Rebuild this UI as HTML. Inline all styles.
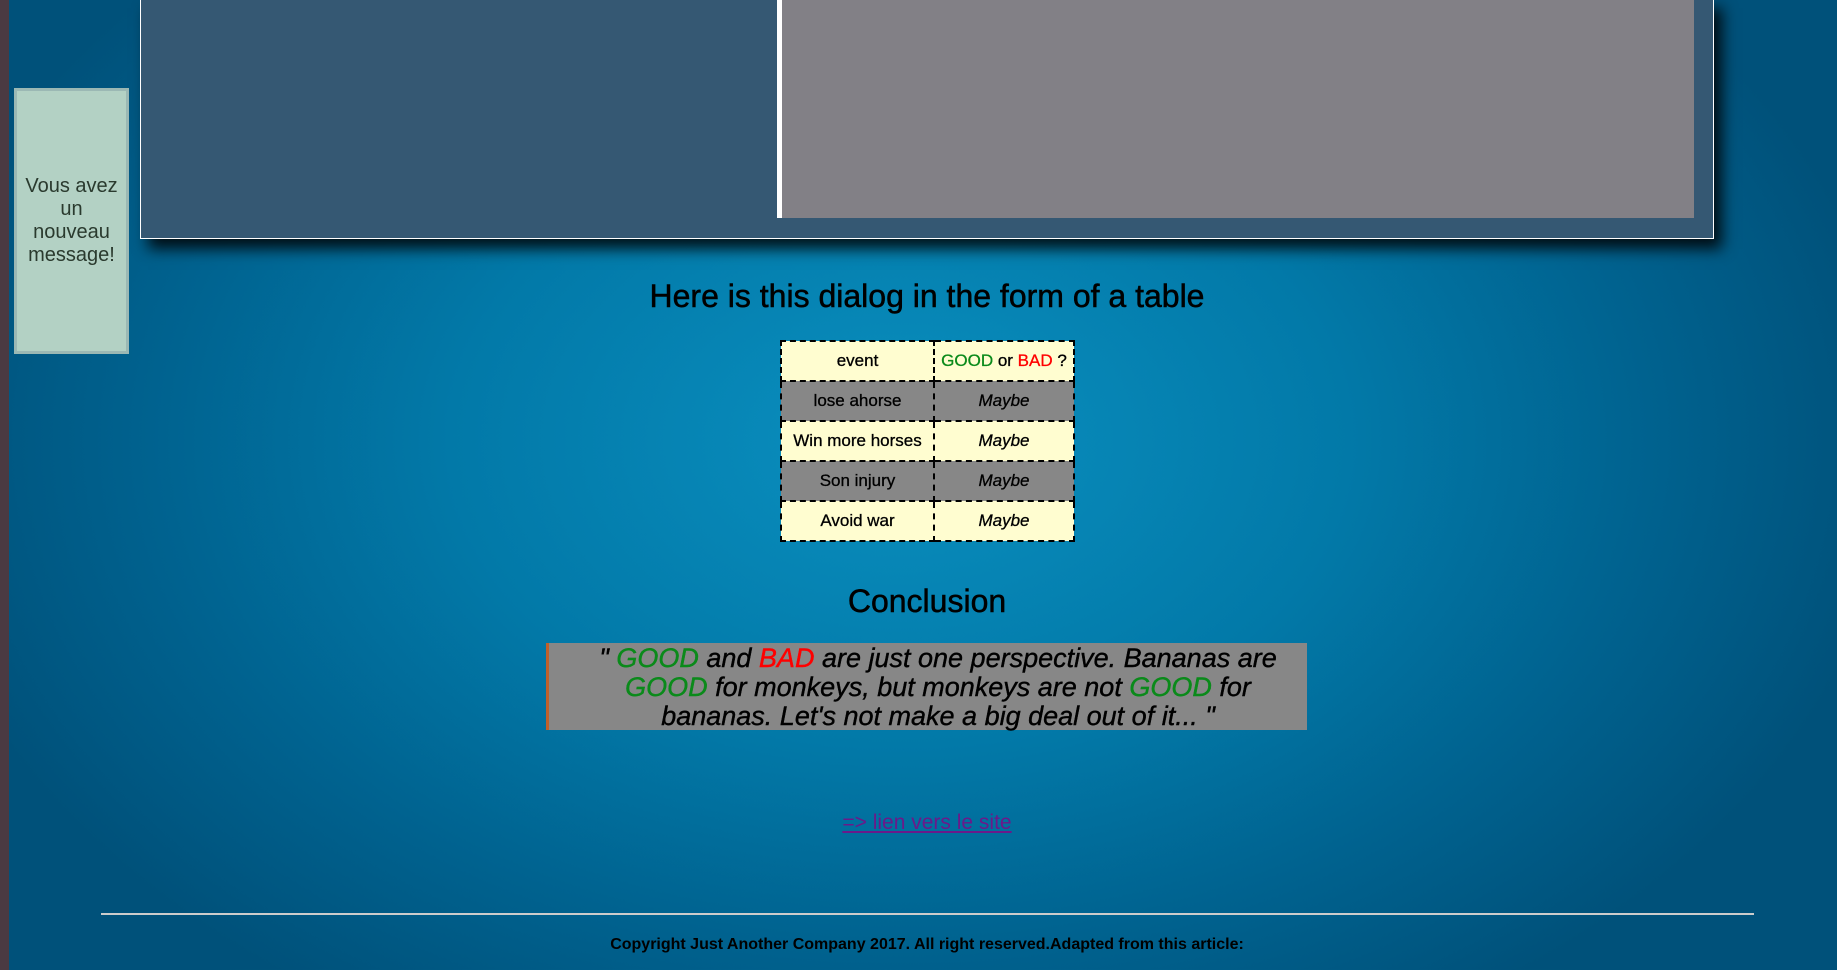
<!DOCTYPE html>
<html><head><meta charset="utf-8"><style>
*{margin:0;padding:0;box-sizing:border-box}
html,body{width:1837px;height:970px;overflow:hidden}
body{position:relative;font-family:"Liberation Sans","DejaVu Sans",sans-serif;
background:radial-gradient(ellipse 1000px 680px at 900px 440px,#0a8fbf 0%,#0279a8 45%,#00628f 75%,#00517a 100%);}
.strip{position:absolute;left:0;top:0;width:9px;height:970px;background:#4a3a42}
.msg{position:absolute;left:14px;top:88px;width:115px;height:266px;background:#b3d1c4;border:3px solid #9bb8b4;
display:flex;align-items:center;justify-content:center;text-align:center;color:#2a3a2e;font-size:20px;line-height:23px}
.panel{position:absolute;left:140px;top:-2px;width:1574px;height:241px;background:#355873;border:1px solid #fff;border-top:none;box-shadow:8px 10px 14px rgba(0,0,0,.85)}
.gray{position:absolute;left:636px;top:0;width:917px;height:220px;background:#828086;border-left:5px solid #fff}
h2{position:absolute;left:0;width:1854px;text-align:center;font-weight:normal;color:#000;font-size:32px;-webkit-text-stroke:0.5px #000}
table{position:absolute;left:780px;top:340px;width:295px;border-collapse:collapse;font-size:17px}
td{border:2px dashed #000;height:40px;text-align:center;padding:0 3px;white-space:nowrap;-webkit-text-stroke:0.3px #000}
.y td{background:#fffdd0}.g td{background:#878787}
td.i{font-style:italic}
.quote{position:absolute;left:546px;top:643px;width:761px;height:87px;background:#878787;border-left:3px solid #c0602a;
font-style:italic;font-size:27px;line-height:29px;text-align:center;padding:1px 20px 0 40px;color:#000;-webkit-text-stroke:0.4px}
.gr{color:#0a8a1a;-webkit-text-stroke-color:#0a8a1a}.rd{color:#f00;-webkit-text-stroke-color:#f00}
a{position:absolute;left:0;width:1854px;top:811px;text-align:center;color:#6a1a8a;font-size:21px}
hr{position:absolute;left:101px;top:913px;width:1653px;border:none;border-top:2px solid #ccc}
.copy{position:absolute;left:0;width:1854px;top:936px;text-align:center;font-size:16px;font-weight:bold;color:#000}
</style></head><body>
<div class="strip"></div>
<div class="panel"><div class="gray"></div></div>
<div class="msg">Vous avez<br>un<br>nouveau<br>message!</div>
<h2 style="top:278px">Here is this dialog in the form of a table</h2>
<table>
<tr class="y"><td style="width:153px">event</td><td><span class="gr">GOOD</span> or <span class="rd">BAD</span> ?</td></tr>
<tr class="g"><td>lose ahorse</td><td class="i">Maybe</td></tr>
<tr class="y"><td>Win more horses</td><td class="i">Maybe</td></tr>
<tr class="g"><td>Son injury</td><td class="i">Maybe</td></tr>
<tr class="y"><td>Avoid war</td><td class="i">Maybe</td></tr>
</table>
<h2 style="top:583px">Conclusion</h2>
<div class="quote">" <span class="gr">GOOD</span> and <span class="rd">BAD</span> are just one perspective. Bananas are <span class="gr">GOOD</span> for monkeys, but monkeys are not <span class="gr">GOOD</span> for bananas. Let's not make a big deal out of it... "</div>
<a href="#">=&gt; lien vers le site</a>
<hr>
<div class="copy">Copyright Just Another Company 2017. All right reserved.Adapted from this article:</div>
</body></html>
